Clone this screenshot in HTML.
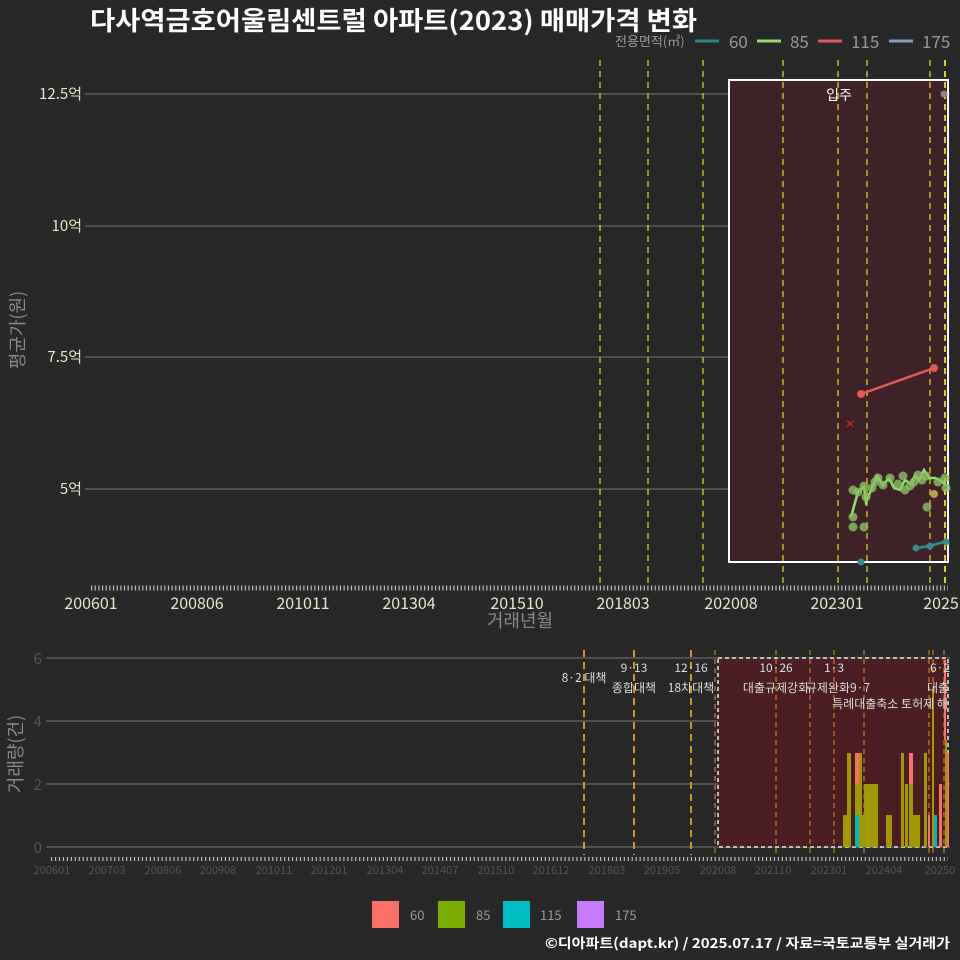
<!DOCTYPE html>
<html><head><meta charset="utf-8"><style>
html,body{margin:0;padding:0;background:#282828;}
svg{display:block;font-family:"Noto Sans CJK KR","Liberation Sans",sans-serif;}
</style></head><body>
<svg width="960" height="960" viewBox="0 0 960 960" xmlns="http://www.w3.org/2000/svg">
<rect width="960" height="960" fill="#282828"/>
<text x="90" y="30" font-size="26" font-weight="bold" fill="#ffffff" textLength="607" lengthAdjust="spacingAndGlyphs">다사역금호어울림센트럴 아파트(2023) 매매가격 변화</text>
<!-- legend top -->
<text x="615" y="46" font-size="13" fill="#999">전용면적(㎡)</text>
<line x1="695" y1="41" x2="719" y2="41" stroke="#2a8a8a" stroke-width="3"/><text x="729" y="48" font-size="17" fill="#999">60</text>
<line x1="757" y1="41" x2="781" y2="41" stroke="#90e070" stroke-width="3"/><text x="790" y="48" font-size="17" fill="#999">85</text>
<line x1="818" y1="41" x2="842" y2="41" stroke="#e05858" stroke-width="3"/><text x="851" y="48" font-size="17" fill="#999">115</text>
<line x1="889" y1="41" x2="913" y2="41" stroke="#7f9fc0" stroke-width="3"/><text x="922" y="48" font-size="17" fill="#999">175</text>
<!-- top grid -->
<g stroke="#777" stroke-width="1">
<line x1="85" y1="94" x2="950" y2="94"/><line x1="85" y1="226" x2="950" y2="226"/>
<line x1="85" y1="357" x2="950" y2="357"/><line x1="85" y1="489" x2="950" y2="489"/>
</g>
<g font-size="15" fill="#e8e4c8" text-anchor="end">
<text x="82" y="99">12.5억</text><text x="82" y="231">10억</text><text x="82" y="362">7.5억</text><text x="82" y="494">5억</text>
</g>
<text transform="translate(24,330) rotate(-90)" font-size="18" fill="#888" text-anchor="middle">평균가(원)</text>
<rect x="729" y="80" width="219" height="482" fill="#3e2228" stroke="#fff" stroke-width="2"/>
<g stroke="#d8d020" stroke-width="1.3" stroke-dasharray="6,5">
<line x1="600" y1="60" x2="600" y2="585"/><line x1="648" y1="60" x2="648" y2="585"/>
<line x1="703" y1="60" x2="703" y2="585"/><line x1="783" y1="60" x2="783" y2="585"/>
<line x1="838" y1="60" x2="838" y2="585"/><line x1="867" y1="60" x2="867" y2="585"/>
<line x1="930" y1="60" x2="930" y2="585"/><line x1="945" y1="60" x2="945" y2="585" stroke-width="2"/>
</g>
<text x="839" y="100" font-size="14" fill="#fff" text-anchor="middle">입주</text>
<line x1="91" y1="588" x2="948" y2="588" stroke="#bbb" stroke-width="5" stroke-dasharray="1.2,2.46"/>
<g font-size="16" fill="#e8e4c8" text-anchor="middle">
<text x="91" y="609">200601</text><text x="197" y="609">200806</text><text x="303" y="609">201011</text>
<text x="409" y="609">201304</text><text x="517" y="609">201510</text><text x="623" y="609">201803</text>
<text x="731" y="609">202008</text><text x="837" y="609">202301</text><text x="941" y="609">2025</text>
</g>
<text x="520" y="627" font-size="18" fill="#888" text-anchor="middle">거래년월</text>
<!-- data top -->
<polyline points="861,394 934,368" stroke="#e05858" stroke-width="2.5" fill="none"/>
<circle cx="861" cy="394" r="4" fill="#e05858"/><circle cx="934" cy="368" r="4" fill="#e05858"/>
<text x="850" y="428" font-size="12" fill="#e02020" text-anchor="middle">✕</text>
<polyline points="916,548 930,546 940,543 948,541" stroke="#3a8a8a" stroke-width="2.5" fill="none"/>
<circle cx="916" cy="548" r="3.5" fill="#3a8a8a"/><circle cx="930" cy="546" r="3.5" fill="#3a8a8a"/><circle cx="946" cy="542" r="3.5" fill="#3a8a8a"/>
<circle cx="861" cy="562" r="3.5" fill="#3a8a8a"/>
<circle cx="944" cy="94" r="3.5" fill="#888"/>
<polyline points="851,517 858,492 864,487 866,502 872,488 877,476 883,485 889,478 894,488 900,490 905,480 911,484 915,475 919,480 924,470 929,478 935,478 940,480 946,485" stroke="#90e070" stroke-width="2.5" fill="none"/>
<g fill="#8cc066" fill-opacity="0.8">
<circle cx="853" cy="490" r="4.5"/><circle cx="864" cy="486" r="4.5"/><circle cx="875" cy="482" r="4.5"/><circle cx="878" cy="478" r="4.5"/>
<circle cx="866" cy="497" r="4.5"/><circle cx="890" cy="478" r="4.5"/><circle cx="903" cy="476" r="4.5"/><circle cx="905" cy="490" r="4.5"/>
<circle cx="910" cy="486" r="4.5"/><circle cx="914" cy="482" r="4.5"/><circle cx="918" cy="475" r="4.5"/><circle cx="926" cy="476" r="4.5"/>
<circle cx="927" cy="507" r="4.5"/><circle cx="853" cy="527" r="4.5"/><circle cx="864" cy="527" r="4.5"/>
<circle cx="853" cy="517" r="4.5"/><circle cx="945" cy="478" r="4.5"/><circle cx="858" cy="492" r="4.5"/><circle cx="872" cy="488" r="4.5"/>
<circle cx="898" cy="484" r="4.5"/><circle cx="922" cy="480" r="4.5"/><circle cx="938" cy="482" r="4.5"/><circle cx="883" cy="485" r="4.5"/>
<circle cx="946" cy="488" r="4.5"/>
</g>
<circle cx="934" cy="494" r="4" fill="#b0a050"/>
<!-- bottom -->
<g stroke="#777" stroke-width="1">
<line x1="46" y1="658" x2="950" y2="658"/><line x1="46" y1="721" x2="950" y2="721"/>
<line x1="46" y1="784" x2="950" y2="784"/><line x1="46" y1="847" x2="950" y2="847"/>
</g>
<g font-size="15" fill="#555" text-anchor="end">
<text x="42" y="664">6</text><text x="42" y="727">4</text><text x="42" y="790">2</text><text x="42" y="853">0</text>
</g>
<text transform="translate(22,754) rotate(-90)" font-size="18" fill="#888" text-anchor="middle">거래량(건)</text>
<rect x="718" y="658" width="230" height="189" fill="#4a1e22" stroke="#bbb" stroke-width="2" stroke-dasharray="4,3"/>
<g stroke="#e8a020" stroke-width="1.8" stroke-dasharray="7,5">
<line x1="584" y1="650" x2="584" y2="855"/><line x1="634" y1="650" x2="634" y2="855"/>
<line x1="691" y1="650" x2="691" y2="855"/>
</g>
<g stroke="#e89020" stroke-width="1" stroke-dasharray="5,4">
<line x1="715" y1="650" x2="715" y2="855"/><line x1="776" y1="650" x2="776" y2="855"/>
<line x1="810" y1="650" x2="810" y2="855"/><line x1="834" y1="650" x2="834" y2="855"/>
<line x1="864" y1="650" x2="864" y2="855"/><line x1="929" y1="650" x2="929" y2="855"/>
<line x1="933" y1="650" x2="933" y2="855"/><line x1="944" y1="650" x2="944" y2="855"/>
</g>
<!-- bars -->
<g fill="#a09a00">
<rect x="843" y="815" width="4" height="32"/><rect x="847" y="753" width="4" height="94"/>
<rect x="855" y="784" width="4" height="31"/><rect x="859" y="753" width="3" height="94"/>
<rect x="862" y="815" width="2" height="32"/><rect x="864" y="784" width="7" height="63"/>
<rect x="871" y="784" width="7" height="63"/><rect x="886" y="815" width="6" height="32"/>
<rect x="901" y="753" width="3" height="94"/><rect x="905" y="784" width="3" height="63"/>
<rect x="909" y="784" width="4" height="63"/><rect x="909" y="815" width="11" height="32"/>
<rect x="924" y="753" width="3" height="94"/><rect x="932" y="690" width="2" height="157"/>
<rect x="945" y="740" width="2" height="107"/>
</g>
<rect x="855" y="753" width="4" height="31" fill="#f87068"/><rect x="855" y="815" width="4" height="32" fill="#00b8c0"/>
<rect x="909" y="753" width="4" height="31" fill="#f87068"/>
<rect x="928" y="815" width="2" height="32" fill="#f87068"/>
<rect x="934" y="815" width="3" height="32" fill="#00b8c0"/>
<rect x="939" y="784" width="3" height="63" fill="#f87068"/>
<rect x="944" y="660" width="2" height="80" fill="#f87068"/>
<rect x="947" y="753" width="2" height="94" fill="#f87068"/>
<g font-size="12" fill="#ddd" text-anchor="middle">
<text x="584" y="682">8·2 대책</text>
<text x="634" y="672">9·13</text><text x="634" y="692">종합대책</text>
<text x="691" y="672">12·16</text><text x="691" y="692">18차대책</text>
<text x="776" y="672">10·26</text><text x="776" y="692">대출규제강화</text>
<text x="834" y="672">1·3</text><text x="838" y="692">규제완화9·7</text>
<text x="890" y="708">특례대출축소 토허제 해</text>
<text x="940" y="672">6·2</text><text x="938" y="692">대출</text>
</g>
<line x1="51" y1="859" x2="948" y2="859" stroke="#bbb" stroke-width="4" stroke-dasharray="1.2,2.75"/>
<g font-size="11" fill="#555" text-anchor="middle">
<text x="52" y="874">200601</text><text x="107" y="874">200703</text><text x="163" y="874">200806</text>
<text x="218" y="874">200908</text><text x="274" y="874">201011</text><text x="329" y="874">201201</text>
<text x="385" y="874">201304</text><text x="440" y="874">201407</text><text x="496" y="874">201510</text>
<text x="551" y="874">201612</text><text x="607" y="874">201803</text><text x="662" y="874">201905</text>
<text x="718" y="874">202008</text><text x="773" y="874">202110</text><text x="829" y="874">202301</text>
<text x="884" y="874">202404</text><text x="940" y="874">20250</text>
</g>
<!-- bottom legend -->
<rect x="372" y="901" width="27" height="27" fill="#f87068"/><text x="410" y="920" font-size="13" fill="#999">60</text>
<rect x="438" y="901" width="27" height="27" fill="#7cae00"/><text x="476" y="920" font-size="13" fill="#999">85</text>
<rect x="503" y="901" width="27" height="27" fill="#00bfc4"/><text x="540" y="920" font-size="13" fill="#999">115</text>
<rect x="577" y="901" width="27" height="27" fill="#c77cff"/><text x="615" y="920" font-size="13" fill="#999">175</text>
<text x="950" y="948" font-size="13.5" font-weight="bold" fill="#fff" text-anchor="end" textLength="405" lengthAdjust="spacingAndGlyphs">©디아파트(dapt.kr) / 2025.07.17 / 자료=국토교통부 실거래가</text>
</svg>
</body></html>
